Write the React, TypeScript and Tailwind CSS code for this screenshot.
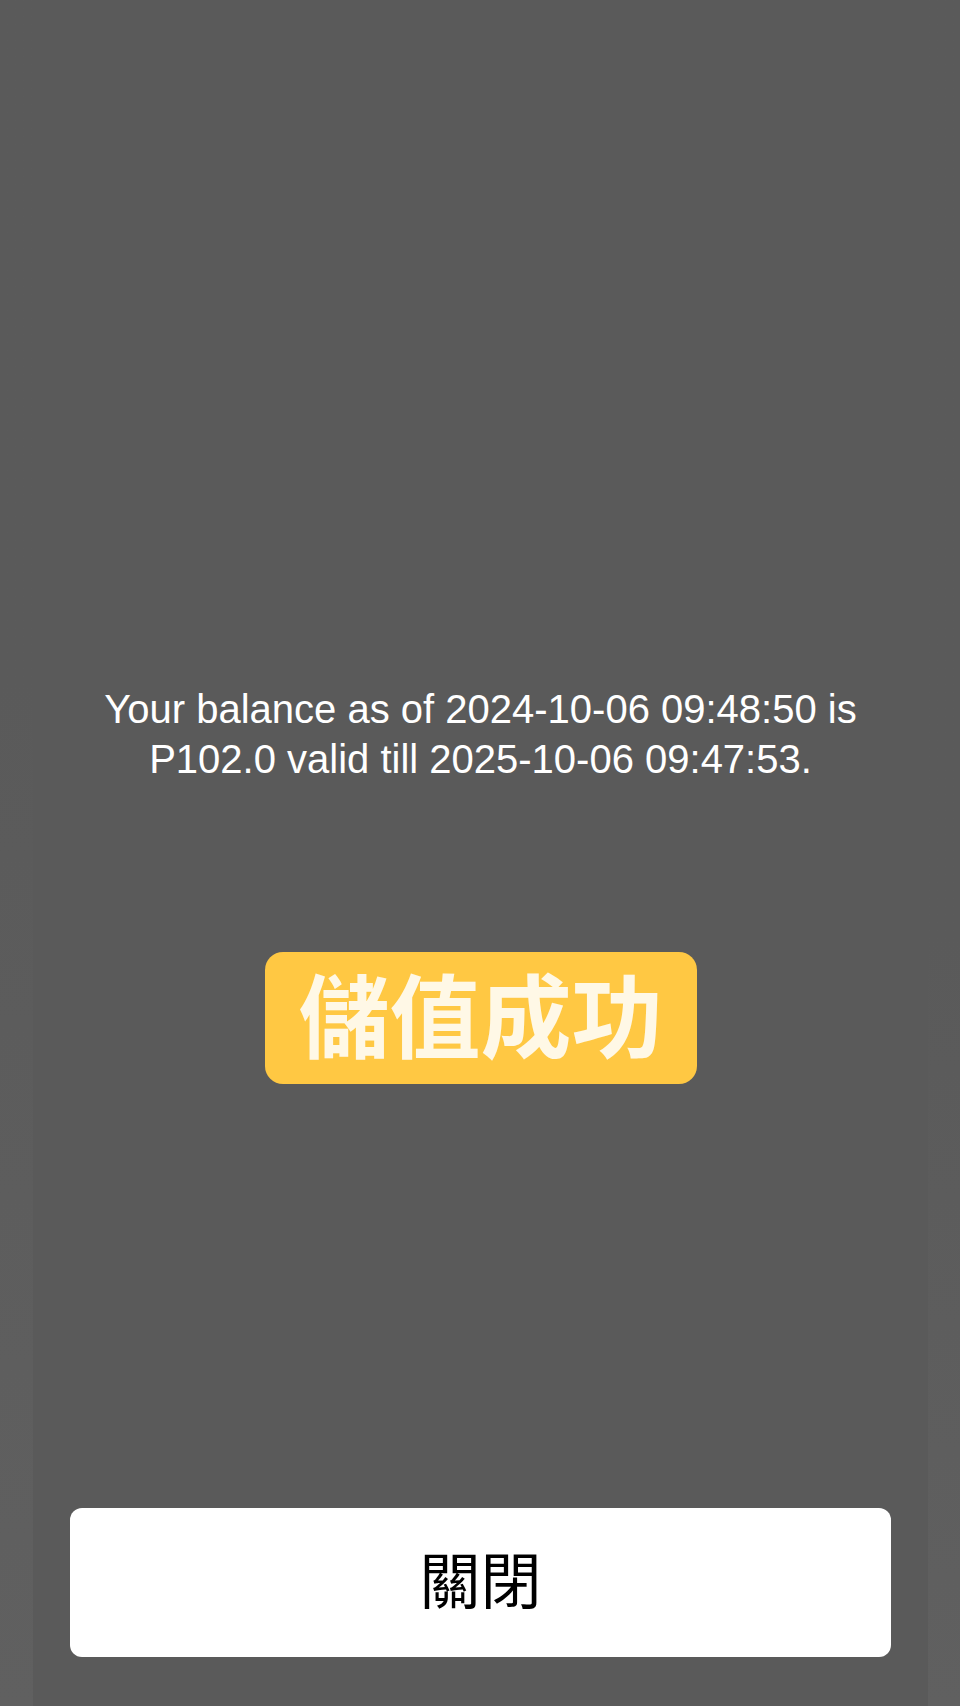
export default function App() {
  return (
    <div className="flex min-h-[1706px] w-full bg-[#5a5a5a]">
      <div className="w-[33px] shrink-0 bg-gradient-to-b from-[#5a5a5a] via-[#5a5a5a] via-40% to-[#606060]" />

      <main className="flex flex-1 flex-col items-center pt-[684px] pb-[49px]">
        <p className="text-center font-['Liberation_Sans',Arial,sans-serif] text-[40px] leading-[50px] text-white">
          Your balance as of 2024-10-06 09:48:50 is
          <br />
          P102.0 valid till 2025-10-06 09:47:53.
        </p>

        <div className="mt-[168px] flex h-[132px] w-[432px] items-center justify-center rounded-[18px] bg-[#ffc843] pb-[14px]">
          <span className="font-['Noto_Sans_CJK_TC','Noto_Sans_CJK_SC',sans-serif] text-[91px] font-semibold leading-none text-[#fff8e6]">
            儲值成功
          </span>
        </div>

        <div className="flex-1" />

        <button className="flex h-[149px] w-[821px] items-center justify-center rounded-[12px] bg-white pb-[10px]">
          <span className="font-['Noto_Sans_CJK_TC','Noto_Sans_CJK_SC',sans-serif] text-[61px] leading-none text-black">
            關閉
          </span>
        </button>
      </main>

      <div className="w-[32px] shrink-0 bg-gradient-to-b from-[#5a5a5a] via-[#5a5a5a] via-55% to-[#606060]" />
    </div>
  );
}
